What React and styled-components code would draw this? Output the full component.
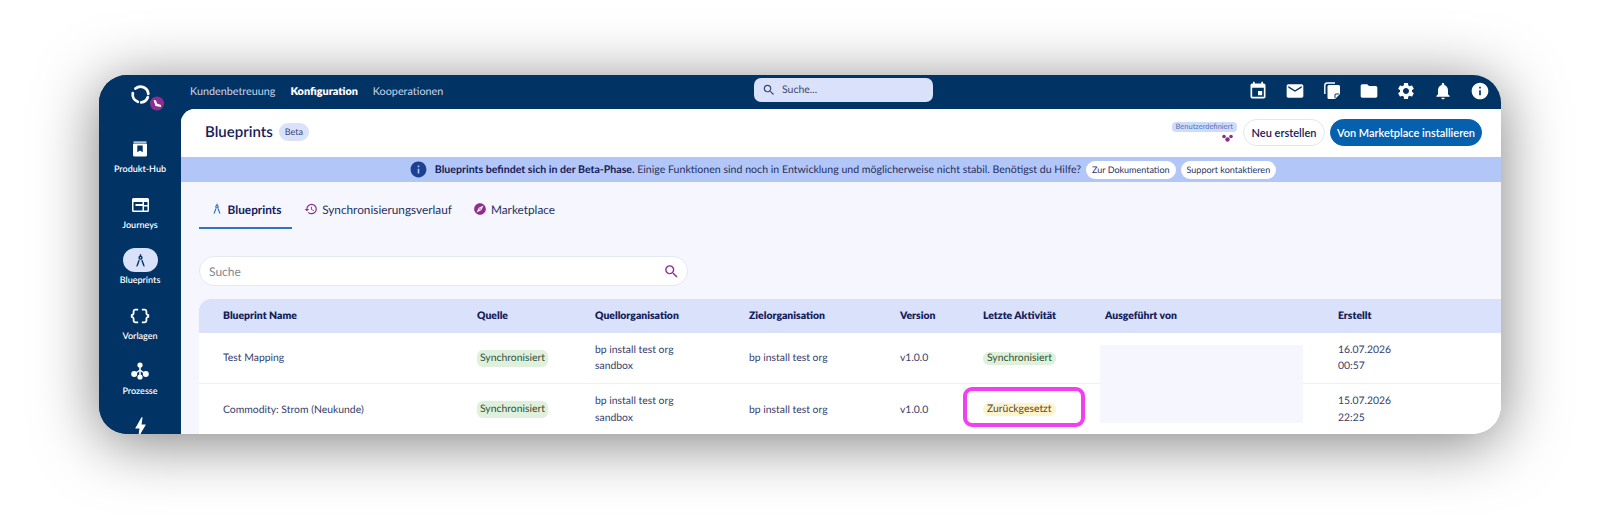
import React from 'react'
import styled, { createGlobalStyle } from 'styled-components'
import {
  MdArchitecture, MdBolt, MdDataObject, MdEmail, MdEvent, MdExplore, MdFolder,
  MdHistory, MdInfo, MdNotifications, MdSearch, MdSettings,
} from 'react-icons/md'

const GlobalStyle = createGlobalStyle`
  html, body { margin: 0; background: #fff; }
  body {
    font-family: "Lato", "Open Sans", sans-serif;
    color: #1a2458;
    overflow: hidden;
    text-rendering: geometricPrecision;
  }
  * { box-sizing: border-box; }
`

const Page = styled.div`
  width: 1600px;
  height: 529px;
  padding: 75px 99px 0 99px;
`

const Frame = styled.div`
  display: flex;
  width: 1402px;
  height: 359px;
  border-radius: 28px;
  overflow: hidden;
  background: #023365;
  box-shadow: 0 8px 62px rgba(0, 0, 0, 0.5);
`

const Sidebar = styled.aside`
  flex: 0 0 82px;
  display: flex;
  flex-direction: column;
  align-items: center;
  padding-top: 7px;
  background: #023365;
`

const LogoWrap = styled.div`
  flex: none;
  width: 40px;
  height: 40px;
  margin-bottom: 15px;
  & svg { overflow: visible; }
`

const SideItem = styled.div`
  flex: none;
  display: flex;
  flex-direction: column;
  align-items: center;
  width: 82px;
  height: 55.6px;
  color: #fff;
  font-size: 9px;
  font-weight: 600;
  line-height: 12px;
`

const SideIcon = styled.div`
  display: flex;
  align-items: center;
  justify-content: center;
  width: 35px;
  height: 24px;
  margin-bottom: 2px;
  border-radius: 12px;
  background: ${p => (p.$active ? '#d9e1fb' : 'transparent')};
  color: ${p => (p.$active ? '#023365' : '#fff')};
`

const Main = styled.div`
  flex: 1;
  min-width: 0;
  display: flex;
  flex-direction: column;
`

const TopBar = styled.header`
  position: relative;
  flex: 0 0 34px;
  display: flex;
  align-items: center;
  padding: 0 11px 2px 9px;
`

const TopNav = styled.nav`
  display: flex;
  gap: 15px;
`

const TopLink = styled.span`
  color: ${p => (p.$active ? '#fff' : '#c9d6ec')};
  font-size: 10.8px;
  font-weight: ${p => (p.$active ? 800 : 400)};
`

const TopSearch = styled.div`
  position: absolute;
  left: 573px;
  top: 3px;
  display: flex;
  align-items: center;
  gap: 6px;
  width: 179px;
  height: 24px;
  padding-left: 8px;
  border-radius: 7px;
  background: #d9e1fb;
  color: #3f4a72;
  font-size: 10.5px;
`

const TopIcons = styled.div`
  display: flex;
  gap: 17px;
  margin-left: auto;
  color: #fff;
  font-size: 20px;
  & > svg { display: block; }
`

const Card = styled.section`
  flex: 1;
  min-height: 0;
  display: flex;
  flex-direction: column;
  border-top-left-radius: 14px;
  overflow: hidden;
  background: #f5f6fe;
`

const PageHeader = styled.div`
  flex: 0 0 48px;
  display: flex;
  align-items: center;
  padding: 0 19px 2px 24px;
  background: #fff;
`

const Title = styled.h1`
  margin: 0 6px 0 0;
  color: #14205a;
  font-size: 15px;
  font-weight: 600;
`

const BetaPill = styled.span`
  padding: 2px 6px;
  border-radius: 9px;
  background: #d9e1fb;
  color: #3a4670;
  font-size: 9px;
  line-height: 14px;
`

const HeaderActions = styled.div`
  display: flex;
  align-items: center;
  gap: 5px;
  margin-left: auto;
`

const CustomTag = styled.div`
  display: flex;
  flex-direction: column;
  align-items: flex-end;
  gap: 2px;
  margin-right: 1px;
  color: #8e2f8e;
  & svg { margin-right: 4px; }
`

const TagText = styled.span`
  padding: 0 4px;
  border-radius: 4px;
  background: #cfdcf9;
  color: #4f74b8;
  font-size: 7.5px;
  line-height: 10px;
  white-space: nowrap;
`

const Button = styled.button`
  width: ${p => (p.$primary ? 152 : 82)}px;
  height: 27px;
  padding: 0;
  border: 1px solid ${p => (p.$primary ? '#0560ae' : '#e3e5ee')};
  border-radius: 14px;
  background: ${p => (p.$primary ? '#0560ae' : '#fff')};
  color: ${p => (p.$primary ? '#fff' : '#14205a')};
  font-family: inherit;
  font-size: 11px;
  font-weight: 600;
  white-space: nowrap;
`

const Banner = styled.div`
  flex: 0 0 25px;
  display: flex;
  align-items: center;
  justify-content: center;
  gap: 5px;
  padding-left: 3px;
  background: #b3c6f8;
  color: #26315f;
  font-size: 10.6px;
  & strong { font-weight: 700; color: #14205a; }
`

const BannerIcon = styled.span`
  display: flex;
  color: #1d4192;
  font-size: 19px;
  margin-right: 2px;
`

const BannerButton = styled.span`
  display: flex;
  align-items: center;
  height: 18px;
  padding: 0 6px;
  border-radius: 9px;
  background: #fff;
  color: #26315f;
  font-size: 9px;
`

const Body = styled.div`
  flex: 1;
  min-height: 0;
  position: relative;
  padding: 10px 0 0 18px;
`

const Tabs = styled.div`
  display: flex;
  gap: 12px;
  margin-bottom: 27px;
`

const Tab = styled.div`
  display: flex;
  align-items: center;
  justify-content: center;
  gap: 4px;
  width: ${p => p.$width}px;
  height: 37px;
  padding-bottom: 1px;
  border-bottom: 2px solid ${p => (p.$active ? '#2f74bd' : 'transparent')};
  color: ${p => (p.$active ? '#14205a' : '#26315f')};
  font-size: 11.8px;
  font-weight: ${p => (p.$active ? 700 : 400)};
  white-space: nowrap;
`

const TabIcon = styled.span`
  display: flex;
  color: ${p => p.$color};
  font-size: 14px;
`

const SearchBox = styled.div`
  display: flex;
  align-items: center;
  justify-content: space-between;
  width: 489px;
  height: 30px;
  margin-bottom: 13px;
  padding: 0 7px 0 9px;
  border: 1px solid #e6e8f0;
  border-radius: 15px;
  background: #fff;
  color: #85878f;
  font-size: 12px;
  & svg { color: #8e2f8e; font-size: 17px; }
`

const Table = styled.div`
  border-top-left-radius: 12px;
  overflow: hidden;
  background: #fff;
`

const Row = styled.div`
  display: grid;
  grid-template-columns: 254px 118px 154px 151px 83px 122px 233px 1fr;
  align-items: center;
  height: ${p => p.$height}px;
  padding-left: 24px;
  background: ${p => (p.$head ? '#d9e1fb' : '#fff')};
  border-bottom: ${p => (p.$line ? '1px solid #eff0f3' : '0')};
  color: ${p => (p.$head ? '#14205a' : '#37416a')};
  font-size: 10.4px;
  font-weight: ${p => (p.$head ? 800 : 400)};
`

const TwoLine = styled.div`
  line-height: 16.5px;
`

const Status = styled.span`
  display: inline-block;
  padding: 0 ${p => (p.$slim ? 4 : 3)}px;
  border-radius: 6px;
  background: ${p => (p.$tone === 'warn' ? '#fdf3cf' : '#dff0dd')};
  color: ${p => (p.$tone === 'warn' ? '#5b4a22' : '#2f5235')};
  font-size: 10.4px;
  line-height: ${p => (p.$slim ? 13 : 17)}px;
`

const Redaction = styled.div`
  position: absolute;
  left: 919px;
  top: 163px;
  width: 203px;
  height: 78px;
  background: #f5f6fe;
`

const Highlight = styled.div`
  position: absolute;
  left: 782px;
  top: 205px;
  width: 122px;
  height: 40px;
  border: 4px solid #f23fef;
  border-radius: 9px;
`

const Logo = () => (
  <svg width="40" height="40" viewBox="0 0 40 40" fill="none">
    <g stroke="#fff" strokeWidth="2.8" strokeLinecap="round">
      <path d="M15.500 6.500 A7.800 7.800 0 0 1 28.300 11.800" />
      <path d="M12.800 11.100 A7.800 7.800 0 0 0 17.800 19.800" />
      <path d="M21.200 20.300 A7.800 7.800 0 0 0 27.800 15.200" />
    </g>
    <circle cx="37" cy="21.500" r="7" fill="#8e2f8e" />
    <path d="M33.500 18 L36 18.500 L37 21.500 L41 23 L41 25 L35.500 24 Z" fill="#fff" />
  </svg>
)

const HubIcon = () => (
  <svg width="16" height="16" viewBox="0 0 16 16">
    <rect x="1.500" y="0.500" width="13" height="1.200" fill="#fff" />
    <path fillRule="evenodd" fill="#fff" d="M2 2.500h12a1 1 0 0 1 1 1V14a1.500 1.500 0 0 1-1.500 1.500h-11A1.500 1.500 0 0 1 1 14V3.500a1 1 0 0 1 1-1zM5.300 4.500v6.800L8 9.500l2.700 1.800V4.500z" />
  </svg>
)

const JourneyIcon = () => (
  <svg width="17" height="14" viewBox="0 0 17 14">
    <path fillRule="evenodd" fill="#fff" d="M1.500 0h14A1.500 1.500 0 0 1 17 1.500v11a1.500 1.500 0 0 1-1.500 1.500h-14A1.500 1.500 0 0 1 0 12.500v-11A1.500 1.500 0 0 1 1.500 0zM1.500 4v8.500h9V8h-7V6h7V4zM12 4v3h3.500V4zM12 8.500v4h3.500v-4z" />
  </svg>
)

const ProcessIcon = () => (
  <svg width="18" height="18" viewBox="0 0 18 18">
    <path d="M9 3v11M9 8 3.500 12M9 8l5.500 4" stroke="#fff" strokeWidth="1.500" fill="none" />
    <circle cx="9" cy="3" r="2.600" fill="#fff" />
    <circle cx="3.200" cy="12" r="3" fill="#fff" />
    <circle cx="14.800" cy="12" r="3" fill="#fff" />
    <circle cx="9" cy="15" r="2.600" fill="#fff" />
  </svg>
)

const NotesIcon = () => (
  <svg width="20" height="20" viewBox="0 0 20 20">
    <path fill="none" stroke="#fff" strokeWidth="1.400" d="M2.800 13V4.500A2.500 2.500 0 0 1 5.300 2H13" />
    <path fill="#fff" d="M7 4h9.500A1.500 1.500 0 0 1 18 5.500V13l-5 5H7a1.500 1.500 0 0 1-1.500-1.500v-11A1.500 1.500 0 0 1 7 4z" />
    <path fill="#023365" d="M12.500 17.500V14a1.500 1.500 0 0 1 1.500-1.500h3.500l-1 1H14a.5.5 0 0 0-.5.5v2.500z" />
  </svg>
)

const CustomIcon = () => (
  <svg width="11" height="8" viewBox="0 0 11 8" fill="#8e2f8e">
    <circle cx="2" cy="2.500" r="1.800" />
    <circle cx="9" cy="2.500" r="1.800" />
    <circle cx="5.500" cy="5.500" r="2.200" />
  </svg>
)

const sideItems = [
  { label: 'Produkt-Hub', icon: <HubIcon /> },
  { label: 'Journeys', icon: <JourneyIcon /> },
  { label: 'Blueprints', icon: <MdArchitecture size={17} />, active: true },
  { label: 'Vorlagen', icon: <MdDataObject size={22} /> },
  { label: 'Prozesse', icon: <ProcessIcon /> },
  { label: '', icon: <MdBolt size={25} /> },
]

const rows = [
  { name: 'Test Mapping', activity: 'Synchronisiert', tone: 'ok', date: '16.07.2026', time: '00:57' },
  { name: 'Commodity: Strom (Neukunde)', activity: 'Zurückgesetzt', tone: 'warn', date: '15.07.2026', time: '22:25' },
]

export default function App() {
  return (
    <Page>
      <GlobalStyle />
      <Frame>
        <Sidebar>
          <LogoWrap><Logo /></LogoWrap>
          {sideItems.map(item => (
            <SideItem key={item.label || 'bolt'}>
              <SideIcon $active={item.active}>{item.icon}</SideIcon>
              {item.label}
            </SideItem>
          ))}
        </Sidebar>
        <Main>
          <TopBar>
            <TopNav>
              <TopLink>Kundenbetreuung</TopLink>
              <TopLink $active>Konfiguration</TopLink>
              <TopLink>Kooperationen</TopLink>
            </TopNav>
            <TopSearch><MdSearch size={14} />Suche...</TopSearch>
            <TopIcons>
              <MdEvent />
              <MdEmail />
              <NotesIcon />
              <MdFolder />
              <MdSettings />
              <MdNotifications />
              <MdInfo />
            </TopIcons>
          </TopBar>
          <Card>
            <PageHeader>
              <Title>Blueprints</Title>
              <BetaPill>Beta</BetaPill>
              <HeaderActions>
                <CustomTag>
                  <TagText>Benutzerdefiniert</TagText>
                  <CustomIcon />
                </CustomTag>
                <Button>Neu erstellen</Button>
                <Button $primary>Von Marketplace installieren</Button>
              </HeaderActions>
            </PageHeader>
            <Banner>
              <BannerIcon><MdInfo /></BannerIcon>
              <span>
                <strong>Blueprints befindet sich in der Beta-Phase.</strong> Einige Funktionen sind noch in Entwicklung und möglicherweise nicht stabil. Benötigst du Hilfe?
              </span>
              <BannerButton>Zur Dokumentation</BannerButton>
              <BannerButton>Support kontaktieren</BannerButton>
            </Banner>
            <Body>
              <Tabs>
                <Tab $active $width={93}>
                  <TabIcon $color="#2f74bd"><MdArchitecture /></TabIcon>Blueprints
                </Tab>
                <Tab $width={148}>
                  <TabIcon $color="#8e2f8e"><MdHistory /></TabIcon>Synchronisierungsverlauf
                </Tab>
                <Tab $width={100}>
                  <TabIcon $color="#8e2f8e"><MdExplore /></TabIcon>Marketplace
                </Tab>
              </Tabs>
              <SearchBox>Suche<MdSearch /></SearchBox>
              <Table>
                <Row $head $height={34}>
                  <span>Blueprint Name</span>
                  <span>Quelle</span>
                  <span>Quellorganisation</span>
                  <span>Zielorganisation</span>
                  <span>Version</span>
                  <span>Letzte Aktivität</span>
                  <span>Ausgeführt von</span>
                  <span>Erstellt</span>
                </Row>
                {rows.map((row, i) => (
                  <Row key={row.name} $height={51} $line={i === 0}>
                    <span>{row.name}</span>
                    <span><Status>Synchronisiert</Status></span>
                    <TwoLine>bp install test org<br />sandbox</TwoLine>
                    <span>bp install test org</span>
                    <span>v1.0.0</span>
                    <span><Status $slim $tone={row.tone}>{row.activity}</Status></span>
                    <span />
                    <TwoLine>{row.date}<br />{row.time}</TwoLine>
                  </Row>
                ))}
              </Table>
              <Redaction />
              <Highlight />
            </Body>
          </Card>
        </Main>
      </Frame>
    </Page>
  )
}
